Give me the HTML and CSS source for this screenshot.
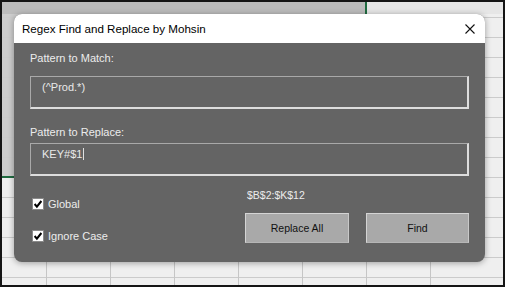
FILE: index.html
```html
<!DOCTYPE html>
<html lang="en">
<head>
<meta charset="utf-8">
<title>Regex Find and Replace by Mohsin</title>
<link rel="stylesheet" href="styles.css">
</head>
<body>
<div class="screen">
  <div class="dialog">
    <div class="titlebar">
      <span class="title">Regex Find and Replace by Mohsin</span>
      <svg class="close" width="10" height="10" viewBox="0 0 10 10" aria-label="Close">
        <path d="M0.5 0.5 L9.5 9.5 M9.5 0.5 L0.5 9.5" stroke="#111" stroke-width="1.1" fill="none"/>
      </svg>
    </div>
    <div class="content">
      <div class="label">Pattern to Match:</div>
      <div class="field field-match">(^Prod.*)</div>
      <div class="label label-replace">Pattern to Replace:</div>
      <div class="field field-replace">KEY#$1<span class="caret"></span></div>
      <div class="bottom">
        <div class="checks">
          <div class="check">
            <svg class="box" width="12" height="12" viewBox="0 0 12 12">
              <rect x="0.5" y="0.5" width="11" height="11" fill="#fff" stroke="#8a8a8a"/>
              <path d="M2.6 6 L4.9 8.6 L9.4 3" stroke="#000" stroke-width="2" fill="none"/>
            </svg>
            <span>Global</span>
          </div>
          <div class="check">
            <svg class="box" width="12" height="12" viewBox="0 0 12 12">
              <rect x="0.5" y="0.5" width="11" height="11" fill="#fff" stroke="#8a8a8a"/>
              <path d="M2.6 6 L4.9 8.6 L9.4 3" stroke="#000" stroke-width="2" fill="none"/>
            </svg>
            <span>Ignore Case</span>
          </div>
        </div>
        <div class="actions">
          <div class="range">$B$2:$K$12</div>
          <div class="buttons">
            <button class="btn btn-replace">Replace All</button>
            <button class="btn btn-find">Find</button>
          </div>
        </div>
      </div>
    </div>
  </div>
</div>
</body>
</html>
```

FILE: styles.css
```css
html, body {
  margin: 0;
  padding: 0;
  background: #151515;
}

.screen {
  position: relative;
  width: 505px;
  height: 287px;
  box-sizing: border-box;
  border: 2px solid #151515;
  overflow: hidden;
  font-family: "Liberation Sans", Arial, sans-serif;
  background:
    linear-gradient(to right, #bcbcbc 0 363px, #1f6b40 363px 365px, #e6e6e6 365px) 0 0 / 100% 12px no-repeat,
    linear-gradient(#1f6b40, #1f6b40) 0 174px / 365px 2px no-repeat,
    repeating-linear-gradient(to right, transparent 0 63px, #c6c6c6 63px 64px) -19px 0 / 100% 100%,
    repeating-linear-gradient(to bottom, transparent 0 19px, #cbcbcb 19px 20px) 0 -4px / 100% 300px,
    linear-gradient(#cdcdcd, #cdcdcd) 0 12px / 363px 163px no-repeat,
    #efefef;
}

.dialog {
  position: absolute;
  left: 12px;
  top: 12px;
  width: 471px;
  height: 248px;
  border-radius: 8px;
  overflow: hidden;
  background: #646464;
  box-shadow: 0 1px 6px rgba(0, 0, 0, 0.35);
  display: flex;
  flex-direction: column;
}

.titlebar {
  height: 29px;
  flex: none;
  background: #ffffff;
  display: flex;
  align-items: center;
  justify-content: space-between;
  padding: 0 10px 0 8px;
}

.title {
  font-size: 11.6px;
  color: #000;
  white-space: nowrap;
}

.close {
  display: block;
}

.content {
  padding: 9px 16px 0 16px;
  color: #ececec;
}

.label {
  font-size: 11px;
  line-height: 13px;
  height: 13px;
  white-space: nowrap;
}

.label-replace {
  margin-top: 17px;
}

.field {
  box-sizing: border-box;
  height: 33px;
  margin-top: 11px;
  border-top: 1px solid #a9a9a9;
  border-left: 1px solid #a9a9a9;
  border-right: 2px solid #dddddd;
  border-bottom: 2px solid #dddddd;
  padding: 3px 11px;
  font-size: 11px;
  line-height: 14px;
  color: #e9e9e9;
  white-space: nowrap;
}

.field-replace {
  margin-top: 4px;
}

.caret {
  display: inline-block;
  width: 1px;
  height: 12px;
  background: #e0e0e0;
  margin-left: 1px;
  vertical-align: -2px;
}

.bottom {
  display: flex;
  justify-content: space-between;
}

.checks {
  display: flex;
  flex-direction: column;
  gap: 20px;
  padding: 22px 0 0 2px;
}

.check {
  display: flex;
  align-items: center;
  gap: 4px;
  height: 12px;
  font-size: 11px;
  line-height: 12px;
  color: #ececec;
  white-space: nowrap;
}

.box {
  display: block;
  flex: none;
}

.actions {
  width: 224px;
  padding-top: 13px;
}

.range {
  font-size: 10.5px;
  line-height: 13px;
  padding-left: 2px;
  color: #ececec;
}

.buttons {
  display: flex;
  gap: 17px;
  margin-top: 11px;
}

.btn {
  box-sizing: border-box;
  height: 30px;
  padding: 0;
  margin: 0;
  background: #a9a9a9;
  border: 1px solid;
  border-color: #d4d4d4 #c8c8c8 #b6b6b6 #d4d4d4;
  font-family: "Liberation Sans", Arial, sans-serif;
  font-size: 10.5px;
  color: #111;
  display: flex;
  align-items: center;
  justify-content: center;
}

.btn-replace {
  width: 104px;
}

.btn-find {
  width: 103px;
}
```
